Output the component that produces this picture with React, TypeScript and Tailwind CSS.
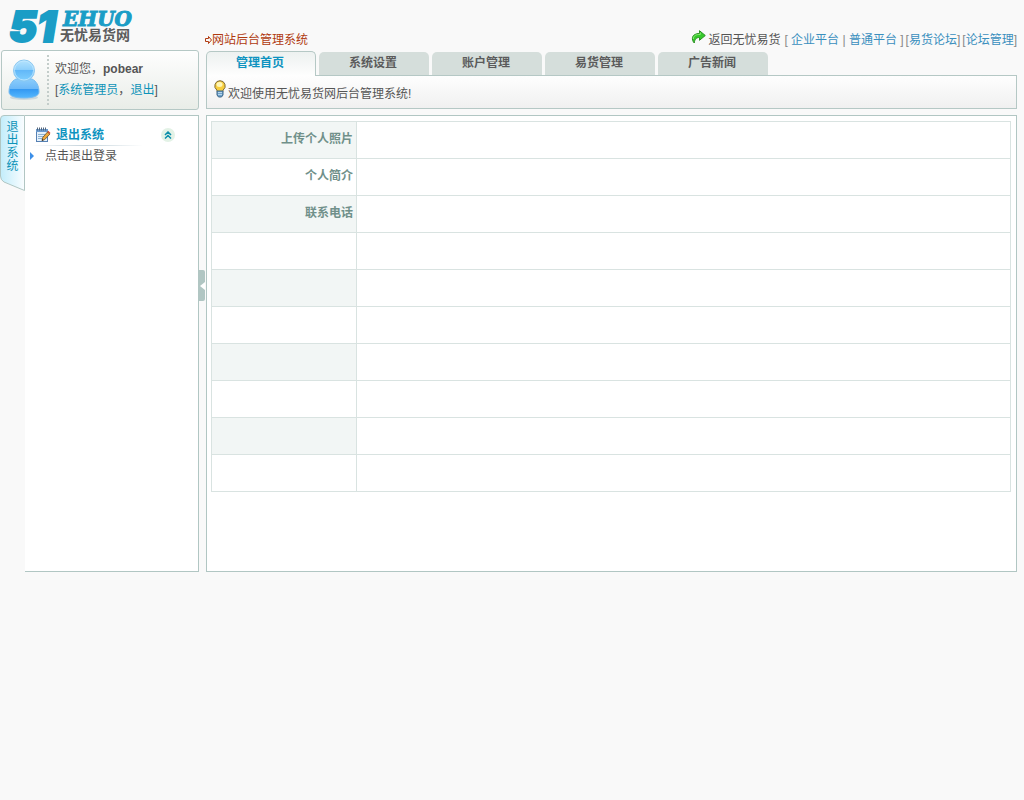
import React, { useState } from "react";

const TABS = ["管理首页", "系统设置", "账户管理", "易货管理", "广告新闻"];
const ROWS = ["上传个人照片", "个人简介", "联系电话", "", "", "", "", "", "", ""];

function Logo() {
  return (
    <svg width="128" height="42" viewBox="0 0 128 42" overflow="visible" className="shrink-0" role="img" aria-label="51EHUO 无忧易货网">
      <text x="1" y="36" fill="#1a9dc6" stroke="#1a9dc6" strokeWidth="2" fontFamily="Inter, sans-serif" fontWeight="900" fontStyle="italic" fontSize="42">
        51
      </text>
      <text x="55" y="20" fill="#1a9dc6" stroke="#1a9dc6" strokeWidth="1" fontFamily="'DejaVu Serif', serif" fontWeight="700" fontStyle="italic" fontSize="20">
        EHUO
      </text>
      <text x="52" y="34" fill="#5c5c5c" fontFamily="'Noto Sans CJK SC', sans-serif" fontWeight="700" fontSize="14">
        无忧易货网
      </text>
    </svg>
  );
}

function UserIcon() {
  return (
    <svg width="32" height="42" viewBox="0 0 32 42" aria-hidden="true">
      <defs>
        <linearGradient id="head" x1="0" y1="0" x2="0" y2="1">
          <stop offset="0" stopColor="#b5e3fd" />
          <stop offset="0.45" stopColor="#8fd0fb" />
          <stop offset="0.5" stopColor="#62b8f8" />
          <stop offset="1" stopColor="#80d0ff" />
        </linearGradient>
        <linearGradient id="torso" x1="0" y1="0" x2="0" y2="1">
          <stop offset="0" stopColor="#8bcdfb" />
          <stop offset="0.5" stopColor="#6db9f8" />
          <stop offset="0.55" stopColor="#3499f2" />
          <stop offset="1" stopColor="#55b8ff" />
        </linearGradient>
      </defs>
      <ellipse cx="16" cy="38.500" rx="14" ry="2.500" fill="#cdd8dc" />
      <path d="M8 20C3.500 22 1 27 1 33c0 4 6 6 15 6s15-2 15-6c0-6-2.500-11-7-13z" fill="url(#torso)" stroke="#78bcf0" />
      <circle cx="16" cy="11.500" r="10.500" fill="url(#head)" stroke="#8cc8f0" />
      <circle cx="16" cy="11.500" r="9.500" fill="none" stroke="#c3e9ff" strokeWidth="0.8" />
    </svg>
  );
}

function NotepadIcon() {
  return (
    <svg width="16" height="16" viewBox="0 0 16 16" aria-hidden="true">
      <rect x="1.500" y="2.500" width="11" height="12" fill="#e4f0fb" stroke="#5681b3" />
      <path d="M1 2h12v3H1z" fill="#6b9bd0" />
      <path d="M2.500.500v3M4.500.500v3M6.500.500v3M8.500.500v3M10.500.500v3" stroke="#52657c" />
      <path d="M3 7.500h7M3 9.500h6M3 11.500h4" stroke="#8fb4d4" />
      <path d="M7 13.500l.7-3 4.800-5.500 2.300 2.200-5 5.300z" fill="#eda73b" stroke="#6b5127" strokeWidth="0.8" />
      <path d="M12.300 4.800l1-1 2.200 2.200-1 1z" fill="#d24b2c" />
      <path d="M6.800 13.700l.5-1.600 1.300 1.100z" fill="#222" />
    </svg>
  );
}

function BulbIcon() {
  return (
    <svg width="12" height="18" viewBox="0 0 12 18" aria-hidden="true">
      <path d="M6 .700a5.200 5.200 0 0 0-3.200 9.300l.7 2h5l.7-2A5.200 5.200 0 0 0 6 .700z" fill="#f7ce3e" stroke="#7d6a3a" />
      <ellipse cx="5.500" cy="4.500" rx="3" ry="2.500" fill="#fff6b5" />
      <path d="M3 11h6v4l-1.500 2h-3L3 15z" fill="#6fa3cc" stroke="#3f6788" />
      <path d="M4 12.500h4M4 14.500h4" stroke="#b8d6ec" />
    </svg>
  );
}

function ReturnIcon() {
  return (
    <svg width="15" height="14" viewBox="0 0 15 14" aria-hidden="true">
      <path d="M8.500.700L14.300 5.500 8.500 10.300V7.500C5.500 7.300 3.500 9.500 3.300 13 .500 10.500-.300 3.500 8.500 3.500z" fill="#35c92a" stroke="#2a8f22" />
      <path d="M9.300 2.500v2C5 4.300 2.500 5.500 2.300 9" fill="none" stroke="#8cec76" />
    </svg>
  );
}

const link = "text-[#3a8fbe] hover:underline";

export default function App() {
  const [active, setActive] = useState(0);
  const [menuOpen, setMenuOpen] = useState(true);
  const [sideOpen, setSideOpen] = useState(true);

  return (
    <div className="min-h-screen bg-[#f9f9f9] font-['Liberation_Sans','Noto_Sans_CJK_SC',sans-serif] text-xs leading-5 text-[#555]">
      <header className="flex h-[50px] pr-[7px]">
        <div className="w-[205px] shrink-0 pt-1.5 pl-2">
          <Logo />
        </div>
        <div className="flex grow items-start justify-between pt-[30px] whitespace-nowrap">
          <h1 className="flex items-center text-[#b03a10]">
            <svg width="7" height="8" viewBox="0 0 7 8" aria-hidden="true">
              <path d="M.500 2.500h3v-2L6.500 4l-3 3.500v-2h-3z" fill="none" stroke="currentColor" />
            </svg>
            网站后台管理系统
          </h1>
          <nav className="flex items-start">
            <ReturnIcon />
            <a href="#home" className="ml-0.5 hover:underline">返回无忧易货</a>
            <span className="ml-1 text-[#888]">
              [<a href="#company" className={link}> 企业平台</a> | <a href="#common" className={link}>普通平台</a> ]
            </span>
            <span className="ml-0.5 text-[#888]">[<a href="#forum" className={link}>易货论坛</a>]</span>
            <span className="ml-0.5 text-[#888]">[<a href="#forum-admin" className={link}>论坛管理</a>]</span>
          </nav>
        </div>
      </header>

      <div className="flex pr-[7px]">
        {sideOpen && (
          <aside className="flex w-[199px] shrink-0 flex-col gap-[5px]">
            <section className="ml-px flex h-[60px] items-center rounded-[3px] border border-[#b5c8c5] bg-linear-to-b from-[#fefefe] to-[#e9ede8] pl-1.5">
              <UserIcon />
              <div className="ml-[7px] h-[50px] border-l-2 border-dotted border-[#c3cdca] pl-1.5 leading-[21px]">
                <p className="pt-1">
                  欢迎您，<strong>pobear</strong>
                </p>
                <p>
                  [<span className="text-[#0e93b8]">系统管理员</span>，<a href="#logout" className="text-[#0e93b8]">退出</a>]
                </p>
              </div>
            </section>

            <div className="flex h-[457px]">
              <button type="button" className="relative flex h-[77px] w-[25px] shrink-0 cursor-pointer justify-center pt-1.5">
                <svg width="25" height="77" viewBox="0 0 25 77" className="absolute inset-0" aria-hidden="true">
                  <defs>
                    <linearGradient id="sideTab" x1="0" y1="0" x2="1" y2="0">
                      <stop offset="0" stopColor="#c2edfb" />
                      <stop offset="1" stopColor="#fafdff" />
                    </linearGradient>
                  </defs>
                  <path d="M24.500.500H4Q.500.500.500 4V61Q.500 65 4 67L24.500 75.500z" fill="url(#sideTab)" stroke="#b1c6c3" />
                </svg>
                <span className="relative w-3 text-xs leading-[13px] text-[#0e93b8]">退出系统</span>
              </button>
              <div className="grow border-y border-r border-[#b1c6c3] bg-white pt-[9px]">
                <div className="flex items-center pr-[23px] pl-2.5">
                  <NotepadIcon />
                  <h2 className="ml-[5px] grow font-bold text-[#0e93c0]">退出系统</h2>
                  <button
                    type="button"
                    aria-label="展开或收起菜单"
                    aria-expanded={menuOpen}
                    onClick={() => setMenuOpen(!menuOpen)}
                    className="flex size-[14px] cursor-pointer items-center justify-center rounded-full bg-[#e3f2e6]"
                  >
                    <svg width="8" height="8" viewBox="0 0 8 8" fill="none" stroke="#0c8eaa" strokeWidth="1.500" aria-hidden="true">
                      <path d="M1 4l3-3 3 3M1 7.500l3-3 3 3" />
                    </svg>
                  </button>
                </div>
                <div className="ml-1.5 h-px w-28 bg-linear-to-r from-white via-[#c3d2da] to-white" />
                {menuOpen && (
                  <ul>
                    <li className="flex items-center pl-[5px]">
                      <svg width="4" height="8" viewBox="0 0 4 8" aria-hidden="true">
                        <path d="M0 0l4 4-4 4z" fill="#3d8fe8" />
                      </svg>
                      <a href="#logout" className="ml-[11px]">点击退出登录</a>
                    </li>
                  </ul>
                )}
              </div>
            </div>
          </aside>
        )}

        <div className="flex w-[7px] shrink-0 flex-col pt-[220px]">
          <button
            type="button"
            aria-label="隐藏或显示侧栏"
            onClick={() => setSideOpen(!sideOpen)}
            className="flex h-[31px] w-1.5 cursor-pointer items-center justify-end rounded-r-xs bg-[#b1c6c3]"
          >
            <svg width="5" height="8" viewBox="0 0 5 8" aria-hidden="true">
              <path d="M5 0v8L0 4z" fill="#fff" />
            </svg>
          </button>
        </div>

        <div className="min-w-0 grow">
          <nav className="mt-px flex items-start gap-[3px]">
            {TABS.map((tab, i) => (
              <button
                key={tab}
                type="button"
                onClick={() => setActive(i)}
                className={
                  i === active
                    ? "relative -mb-px h-[25px] w-[110px] cursor-pointer rounded-t-[5px] border border-b-0 border-[#b5c8c5] bg-linear-to-b from-[#edf1f0] to-[#fefefe] pr-0.5 pb-0.5 font-bold text-[#0e93c0]"
                    : "mt-px h-[23px] w-[110px] cursor-pointer rounded-t-[5px] bg-[#d5dedb] pr-0.5 pb-0.5 font-bold text-[#5b5b5b]"
                }
              >
                {tab}
              </button>
            ))}
          </nav>
          <div className="flex h-[34px] items-center border border-[#b5c8c5] bg-linear-to-b from-[#fefefe] to-[#f0f0f0] pl-[7px]">
            <span className="-mt-1.5"><BulbIcon /></span>
            <p className="ml-0.5 pt-1">欢迎使用无忧易货网后台管理系统!</p>
          </div>

          <main className="mt-1.5 h-[457px] border border-[#b1c6c3] bg-white pt-[5px] pr-[5px] pl-1">
            <table className="w-full table-fixed border-collapse border border-[#d9e3e1]">
              <tbody>
                {ROWS.map((label, i) => (
                  <tr key={i} className="h-[37px] odd:bg-[#f2f6f5]">
                    <th scope="row" className="w-[145px] border border-[#d9e3e1] px-[3px] pb-0.5 text-right font-bold text-[#70908a]">
                      {label}
                    </th>
                    <td className="border border-[#d9e3e1] bg-white" />
                  </tr>
                ))}
              </tbody>
            </table>
          </main>
        </div>
      </div>
    </div>
  );
}
